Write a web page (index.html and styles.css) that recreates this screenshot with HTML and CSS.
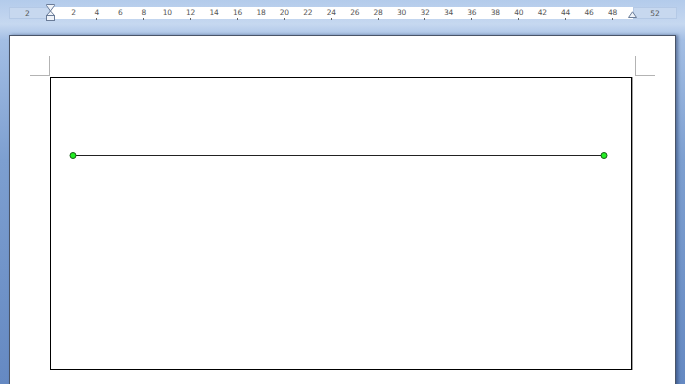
FILE: index.html
```html
<!DOCTYPE html>
<html lang="en">
<head>
  <meta charset="UTF-8" />
  <title>Document</title>
  <link rel="stylesheet" href="styles.css">
</head>
<body>
  <div class="ruler">
    <div class="margin-left"><span>2</span></div>
    <div class="marks" id="marks">
      <svg class="indent-left" width="11" height="17" viewBox="0 0 11 17">
        <path d="M1.5 0.5 H9.5 V1.5 L5.5 7 L9.5 11.5 V11.5 H1.5 L5.5 7 L1.5 1.5 Z" fill="#eef2f8" stroke="#6a7c98" stroke-width="1"/>
        <rect x="1.5" y="11.5" width="8" height="5" fill="#eef2f8" stroke="#6a7c98" stroke-width="1"/>
      </svg>
      <svg class="indent-right" width="9" height="7" viewBox="0 0 9 7">
        <path d="M0.5 6.5 L4.5 0.8 L8.5 6.5 Z" fill="#eef2f8" stroke="#6a7c98" stroke-width="1"/>
      </svg>
    </div>
    <div class="margin-right"><span>52</span></div>
  </div>

  <div class="page">
    <span class="corner corner-left"></span>
    <span class="corner corner-right"></span>
    <div class="frame">
      <svg class="drawing" width="580" height="291" viewBox="0 0 580 291">
        <line x1="22" y1="77.5" x2="553" y2="77.5" stroke="#222" stroke-width="1"/>
        <circle cx="22" cy="77.5" r="3" fill="#22ee22" stroke="#1a5a1a" stroke-width="1"/>
        <circle cx="553" cy="77.5" r="3" fill="#22ee22" stroke="#1a5a1a" stroke-width="1"/>
      </svg>
    </div>
  </div>

  <script>
    const marks = document.getElementById("marks");
    for (let n = 2; n <= 48; n += 2) {
      const cell = document.createElement("span");
      cell.className = n % 4 === 0 ? "num tick" : "num";
      cell.textContent = n;
      marks.appendChild(cell);
    }
  </script>
</body>
</html>
```

FILE: styles.css
```css
body {
  margin: 0;
  height: 384px;
  overflow: hidden;
  font-family: 'DejaVu Sans', sans-serif;
  background: linear-gradient(#b3cbeb 0, #c6d8f0 24px, #a3bee4 40px, #7d9fd0 160px, #6589c2 384px);
}

.ruler {
  display: flex;
  margin: 7px 0 0 9px;
  width: 668px;
  height: 12px;
  font-size: 7.5px;
  line-height: 12px;
  color: #555;
}

.margin-left,
.margin-right {
  background: #c7d8ef;
  border: 1px solid #b4c9e6;
  box-sizing: border-box;
  display: flex;
  justify-content: center;
}

.margin-left {
  width: 41px;
  padding-right: 4px;
}

.margin-right {
  flex: 1;
}

.marks {
  position: relative;
  width: 583px;
  background: #fff;
  display: flex;
  padding-left: 11.7px;
  box-sizing: border-box;
}

.num {
  position: relative;
  width: 23.44px;
  flex: none;
  text-align: center;
  letter-spacing: -0.3px;
}

.tick::after {
  content: "";
  position: absolute;
  left: 11.2px;
  top: 11px;
  width: 1px;
  height: 2px;
  background: #666;
}

.indent-left {
  position: absolute;
  left: -5px;
  top: -3px;
}

.indent-right {
  position: absolute;
  right: -4px;
  top: 4px;
}

.page {
  position: relative;
  margin: 16px 0 0 9px;
  width: 667px;
  height: 360px;
  background: #fff;
  border: 1px solid #4a5568;
  border-bottom: none;
  box-sizing: border-box;
  padding: 41px 0 0 40px;
  box-shadow: 2px 0 3px rgba(30, 50, 90, 0.5);
}

.corner {
  position: absolute;
  top: 20px;
  width: 19px;
  height: 19px;
  border-bottom: 1px solid #b3b3b3;
}

.corner-left {
  left: 20px;
  border-right: 1px solid #b3b3b3;
}

.corner-right {
  left: 625px;
  border-left: 1px solid #b3b3b3;
}

.frame {
  width: 582px;
  height: 293px;
  border: 1px solid #000;
  box-sizing: border-box;
  box-shadow: 1px 0 0 #a0a0a0;
}

.drawing {
  display: block;
}
```
